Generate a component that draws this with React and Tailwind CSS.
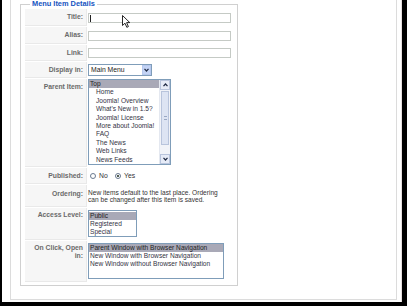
import React from 'react';

const parentItems = [
  'Home',
  'Joomla! Overview',
  "What's New in 1.5?",
  'Joomla! License',
  'More about Joomla!',
  'FAQ',
  'The News',
  'Web Links',
  'News Feeds',
];

function Chevron({ up = false }) {
  return (
    <svg width="5" height="4" viewBox="0 0 5 4" className="block">
      <path
        d={up ? 'M0.5 3.2 L2.5 1 L4.5 3.2' : 'M0.5 0.8 L2.5 3 L4.5 0.8'}
        fill="none"
        stroke="#1f2a44"
        strokeWidth="1.2"
      />
    </svg>
  );
}

function Label({ children, className = '' }) {
  return (
    <div
      className={`w-[62px] shrink-0 bg-[#f6f6f6] border-b border-r border-[#e9e9e9] pr-[3px] text-right font-bold text-[#6a6a6a] text-[6.8px] leading-[8px] ${className}`}
    >
      {children}
    </div>
  );
}

function Radio({ checked }) {
  return (
    <span className="relative inline-block shrink-0 w-[6px] h-[6px] rounded-full border border-[#6a7a90] bg-white">
      {checked && <span className="absolute left-[1px] top-[1px] w-[2px] h-[2px] rounded-full bg-[#1a2a1a]" />}
    </span>
  );
}

export default function App() {
  return (
    <div className="relative w-[407px] h-[306px] bg-black pl-[2px] pr-[5px] pb-[4px] font-['Liberation_Sans',Arial,sans-serif]">
      <div className="h-full bg-white border-r border-[#e6dede] pl-[8px] pr-[4px] pb-[2px]">
        <div className="h-full border-l border-r border-b border-[#dcdcdc] pl-[9px]">
          <fieldset className="w-[218px] h-[286px] border border-[#d0d0d0] px-[4px] pt-[1px]">
            <legend className="ml-[5px] px-[2px] text-[7.4px] leading-[8px] font-bold text-[#1654bf]">
              Menu Item Details
            </legend>

            <div className="flex flex-col gap-[1px]">
              {/* Title */}
              <div className="flex h-[17px]">
                <Label className="flex items-center justify-end">Title:</Label>
                <div className="flex items-center pl-[1px]">
                  <div className="relative w-[143px] h-[10px] border border-[#c5cac5] bg-white">
                    <span className="absolute left-[1px] top-[1px] w-[1px] h-[7px] bg-[#222]" />
                  </div>
                </div>
              </div>

              {/* Alias */}
              <div className="flex h-[17px]">
                <Label className="flex items-center justify-end">Alias:</Label>
                <div className="flex items-center pl-[1px]">
                  <div className="w-[143px] h-[10px] border border-[#c5cac5] bg-white" />
                </div>
              </div>

              {/* Link */}
              <div className="flex h-[16px]">
                <Label className="flex items-center justify-end">Link:</Label>
                <div className="flex items-center pl-[1px]">
                  <div className="w-[143px] h-[10px] border border-[#c5cac5] bg-white" />
                </div>
              </div>

              {/* Display in */}
              <div className="flex h-[16px]">
                <Label className="flex items-center justify-end">Display in:</Label>
                <div className="flex items-center pl-[1px]">
                  <div className="flex w-[64px] h-[12px] border border-[#7f9db9] bg-white">
                    <span className="flex-1 pl-[2px] text-[6.8px] leading-[10px] text-[#222]">Main Menu</span>
                    <span className="flex items-center justify-center w-[9px] h-[10px] bg-[#c3d3f5] border border-[#b6c8ee]">
                      <Chevron />
                    </span>
                  </div>
                </div>
              </div>

              {/* Parent Item */}
              <div className="flex h-[88px]">
                <Label className="pt-[4px]">Parent Item:</Label>
                <div className="pl-[1px]">
                  <div className="flex w-[83px] h-[86px] border border-[#7f9db9] bg-white">
                    <div className="flex-1 text-[6.6px] leading-[8.4px] text-[#333344]">
                      <div className="bg-[#a9a9b7] pl-[1px] text-[#222]">Top</div>
                      {parentItems.map((item) => (
                        <div key={item} className="pl-[7px] whitespace-nowrap overflow-hidden">
                          {item}
                        </div>
                      ))}
                    </div>
                    <div className="flex flex-col w-[11px] bg-[#f1f3f8] border-l border-[#e4e8f0]">
                      <div className="flex items-center justify-center h-[10px] bg-[#e6ebf7] border border-[#b8c4dc]">
                        <Chevron up />
                      </div>
                      <div className="flex-1 py-[1px]">
                        <div className="flex items-center justify-center mx-[1px] h-[54px] bg-[#dde4f3] border border-[#b8c4dc]">
                          <span className="w-[3px] h-[4px] border-y border-[#9aa8c4]" />
                        </div>
                      </div>
                      <div className="flex items-center justify-center h-[10px] bg-[#e6ebf7] border border-[#b8c4dc]">
                        <Chevron />
                      </div>
                    </div>
                  </div>
                </div>
              </div>

              {/* Published */}
              <div className="flex h-[16px]">
                <Label className="flex items-center justify-end">Published:</Label>
                <div className="flex items-center pl-[3px] text-[6.8px] leading-[8px] text-[#333]">
                  <Radio />
                  <span className="w-[19px] pl-[3px]">No</span>
                  <Radio checked />
                  <span className="pl-[3px]">Yes</span>
                </div>
              </div>

              {/* Ordering */}
              <div className="flex h-[22px]">
                <Label className="pt-[5px]">Ordering:</Label>
                <div className="flex items-center pl-[1px] w-[140px] text-[6.6px] leading-[7px] text-[#333]">
                  New items default to the last place. Ordering can be changed after this item is saved.
                </div>
              </div>

              {/* Access Level */}
              <div className="flex h-[32px]">
                <Label className="pt-[3px]">Access Level:</Label>
                <div className="pl-[1px] pt-[2px]">
                  <div className="w-[49px] h-[27px] border border-[#7f9db9] bg-white py-[1px] text-[6.6px] leading-[8px] text-[#333344]">
                    <div className="bg-[#a9a9b7] pl-[1px] text-[#222]">Public</div>
                    <div className="pl-[1px]">Registered</div>
                    <div className="pl-[1px]">Special</div>
                  </div>
                </div>
              </div>

              {/* On Click, Open in */}
              <div className="flex h-[41px]">
                <Label className="pt-[3px] pl-[2px]">On Click, Open in:</Label>
                <div className="pl-[1px] pt-[2px]">
                  <div className="w-[136px] h-[36px] border border-[#7f9db9] bg-white text-[6.6px] leading-[8px] text-[#333344]">
                    <div className="bg-[#a9a9b7] pl-[1px] text-[#222]">Parent Window with Browser Navigation</div>
                    <div className="pl-[1px]">New Window with Browser Navigation</div>
                    <div className="pl-[1px]">New Window without Browser Navigation</div>
                  </div>
                </div>
              </div>
            </div>
          </fieldset>
        </div>
      </div>

      {/* mouse pointer */}
      <svg width="10" height="14" viewBox="0 0 10 14" className="absolute left-[122px] top-[15px]">
        <path
          d="M0.5 0.5 L0.5 10.5 L3 8.2 L4.8 12.3 L6.4 11.6 L4.6 7.6 L7.8 7.6 Z"
          fill="#fff"
          stroke="#111"
          strokeWidth="0.9"
          strokeLinejoin="round"
        />
      </svg>
    </div>
  );
}
